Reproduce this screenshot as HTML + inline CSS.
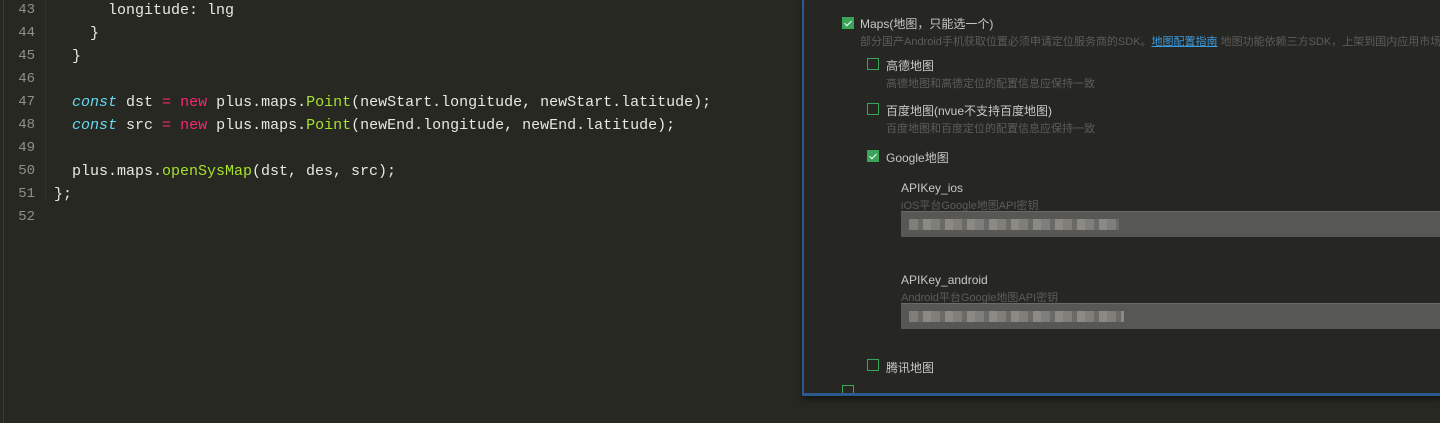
<!DOCTYPE html>
<html><head><meta charset="utf-8"><style>
body{margin:0;width:1440px;height:423px;background:#272822;overflow:hidden;position:relative;font-family:"Liberation Sans","Noto Sans CJK SC",sans-serif}
.code{position:absolute;left:0;top:0;font-family:"Liberation Mono",monospace;font-size:15px;color:#e8e8e2}
.ln{position:absolute;left:0;width:35px;text-align:right;color:#8f908a;font-size:14px}
.l{position:absolute;white-space:pre;height:23px;line-height:23px}
.k{color:#66d9ef;font-style:italic}.r{color:#f92672}.g{color:#a6e22e}
.dlg{position:absolute;left:802px;top:0;width:640px;height:393px;background:#262622;border-left:2px solid #2c5a8f;border-bottom:3px solid #2c5a8f;box-shadow:0 3px 6px rgba(0,0,0,.5);overflow:hidden}
.cb{position:absolute;width:10px;height:10px;border:1px solid #3aa55a}
.cb.on{background:#3aa55a}
.cb.on::after{content:"";position:absolute;left:3px;top:1px;width:3px;height:6px;border:solid #fff;border-width:0 1.5px 1.5px 0;transform:rotate(45deg)}
.t{position:absolute;color:#c8c8c8;font-size:12px;white-space:nowrap}
.s{position:absolute;color:#5c5c5a;font-size:11px;white-space:nowrap}
.in{position:absolute;left:97px;width:545px;height:25px;background:#575754;border-top:1px solid #6a6a68}
.blur{position:absolute;left:8px;top:7px;height:11px;background:repeating-linear-gradient(90deg,#8a8884 0 9px,#6e6e6a 9px 14px,#9a9690 14px 22px);opacity:.8}
</style></head><body>
<div style="position:absolute;left:3px;top:0;width:1px;height:423px;background:#3a3a36"></div>
<div style="position:absolute;left:45px;top:0;width:1px;height:200px;border-left:1px dotted #3a3a36"></div>
<div class="code">
<div class="l ln" style="top:-1px">43</div><div class="l" style="top:-1px;left:108px">longitude: lng</div>
<div class="l ln" style="top:22px">44</div><div class="l" style="top:22px;left:90px">}</div>
<div class="l ln" style="top:45px">45</div><div class="l" style="top:45px;left:72px">}</div>
<div class="l ln" style="top:68px">46</div>
<div class="l ln" style="top:91px">47</div><div class="l" style="top:91px;left:72px"><span class="k">const</span> dst <span class="r">=</span> <span class="r">new</span> plus.maps.<span class="g">Point</span>(newStart.longitude, newStart.latitude);</div>
<div class="l ln" style="top:114px">48</div><div class="l" style="top:114px;left:72px"><span class="k">const</span> src <span class="r">=</span> <span class="r">new</span> plus.maps.<span class="g">Point</span>(newEnd.longitude, newEnd.latitude);</div>
<div class="l ln" style="top:137px">49</div>
<div class="l ln" style="top:160px">50</div><div class="l" style="top:160px;left:72px">plus.maps.<span class="g">openSysMap</span>(dst, des, src);</div>
<div class="l ln" style="top:183px">51</div><div class="l" style="top:183px;left:54px">};</div>
<div class="l ln" style="top:206px">52</div>
</div>
<div class="dlg">
<div class="cb on" style="left:38px;top:17px"></div><div class="t" style="left:56px;top:15px">Maps(地图，只能选一个)</div>
<div class="s" style="left:56px;top:33px">部分国产Android手机获取位置必须申请定位服务商的SDK。<span style="color:#3b9be0;text-decoration:underline">地图配置指南</span> 地图功能依赖三方SDK，上架到国内应用市场需</div>
<div class="cb" style="left:63px;top:58px"></div><div class="t" style="left:82px;top:57px">高德地图</div>
<div class="s" style="left:82px;top:75px">高德地图和高德定位的配置信息应保持一致</div>
<div class="cb" style="left:63px;top:103px"></div><div class="t" style="left:82px;top:102px">百度地图(nvue不支持百度地图)</div>
<div class="s" style="left:82px;top:120px">百度地图和百度定位的配置信息应保持一致</div>
<div class="cb on" style="left:63px;top:150px"></div><div class="t" style="left:82px;top:149px">Google地图</div>
<div class="t" style="left:97px;top:181px">APIKey_ios</div>
<div class="s" style="left:97px;top:197px">iOS平台Google地图API密钥</div>
<div class="in" style="top:211px"><div class="blur" style="width:210px"></div></div>
<div class="t" style="left:97px;top:273px">APIKey_android</div>
<div class="s" style="left:97px;top:289px">Android平台Google地图API密钥</div>
<div class="in" style="top:303px"><div class="blur" style="width:215px"></div></div>
<div class="cb" style="left:63px;top:359px"></div><div class="t" style="left:82px;top:359px">腾讯地图</div>
<div class="cb" style="left:38px;top:385px"></div>
</div>
</body></html>
